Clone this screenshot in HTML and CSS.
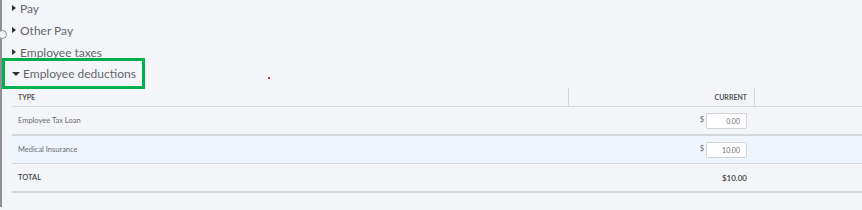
FILE: index.html
```html
<!DOCTYPE html>
<html>
<head>
  <meta charset="utf-8">
  <title>Employee deductions</title>
  <link rel="stylesheet" href="styles.css">
</head>
<body class="body">
  <div id="pagina">
    <span class="knob"></span>
    <span class="dot"></span>
    <div class="secoes">
      <div class="secao"><span class="seta"></span>Pay</div>
      <div class="secao"><span class="seta"></span>Other Pay</div>
      <div class="secao"><span class="seta"></span>Employee taxes</div>
      <div class="secao aberta marcada"><span class="seta baixo"></span>Employee deductions</div>
    </div>
    <div class="tabela">
      <div class="linha cabec">
        <div class="cel">TYPE</div>
        <div class="cel num div">CURRENT</div>
        <div class="cel div"></div>
      </div>
      <div class="linha grossa">
        <div class="cel">Employee Tax Loan</div>
        <div class="cel num"><span class="cifrao">$</span><input class="valor" type="text" value="0.00"></div>
        <div class="cel"></div>
      </div>
      <div class="linha azul">
        <div class="cel">Medical Insurance</div>
        <div class="cel num"><span class="cifrao">$</span><input class="valor" type="text" value="10.00"></div>
        <div class="cel"></div>
      </div>
      <div class="linha grossa total">
        <div class="cel">TOTAL</div>
        <div class="cel num">$10.00</div>
        <div class="cel"></div>
      </div>
    </div>
  </div>
</body>
</html>
```

FILE: styles.css
```css
html, body {
  margin: 0;
  padding: 0;
}

.body {
  background-color: #f4f5f8;
  font-family: Lato, "Open Sans", sans-serif;
  color: #6b6c72;
  overflow: hidden;
}

#pagina {
  position: relative;
  height: 210px;
  border-left: 2px solid #8e9096;
  box-sizing: border-box;
}

/* bolinha na borda esquerda */
.knob {
  position: absolute;
  left: -4px;
  top: 33px;
  width: 7px;
  height: 7px;
  border: 1.5px solid #8e9096;
  border-radius: 50%;
  background-color: #f4f5f8;
}

.dot {
  position: absolute;
  left: 266px;
  top: 80px;
  width: 2px;
  height: 2px;
  background-color: #e8303a;
}

.secoes {
  margin-top: -3px;
}

.secao {
  height: 22px;
  display: flex;
  align-items: center;
  padding-left: 10px;
  font-size: 12px;
  white-space: nowrap;
  color: #66676d;
}

.seta {
  width: 0;
  height: 0;
  border-top: 3.5px solid transparent;
  border-bottom: 3.5px solid transparent;
  border-left: 4.5px solid #2f3036;
  margin-right: 4px;
}

.seta.baixo {
  border-left: 4px solid transparent;
  border-right: 4px solid transparent;
  border-top: 4.5px solid #2f3036;
  border-bottom: 0;
  margin-right: 3px;
}

.marcada {
  margin-top: -5px;
  width: 143px;
  height: 31px;
  box-sizing: border-box;
  border: 3px solid #00b04f;
  padding-left: 7px;
}

.tabela {
  margin-top: -1px;
  margin-left: 10px;
}

.linha {
  display: grid;
  grid-template-columns: 556px 186px 1fr;
  height: 27px;
  border-bottom: 1px solid #d5d7dc;
  font-size: 7.5px;
  align-items: center;
}

.linha.grossa {
  border-bottom: 2px solid #d5d7dc;
}

.linha.azul {
  background-color: #eff5fd;
}

.cabec {
  height: 18px;
  font-weight: bold;
  font-size: 7px;
  color: #55565c;
  align-items: stretch;
}

.cel {
  padding: 0 6px;
  display: flex;
  align-items: center;
}

.cel.num {
  justify-content: flex-end;
  padding-right: 7px;
}

.cel.div {
  border-left: 1px solid #d5d7dc;
}

.cifrao {
  margin-right: 2px;
  margin-top: -3px;
}

.valor {
  width: 41px;
  height: 16px;
  box-sizing: border-box;
  border: 1px solid #cfd2d7;
  border-radius: 2px;
  background-color: white;
  font-family: Lato, "Open Sans", sans-serif;
  font-size: 7px;
  color: #6b6c72;
  text-align: right;
  padding: 0 6px;
}

.total {
  color: #45464c;
  font-weight: 600;
}

.total .num {
  font-size: 8px;
}
```
